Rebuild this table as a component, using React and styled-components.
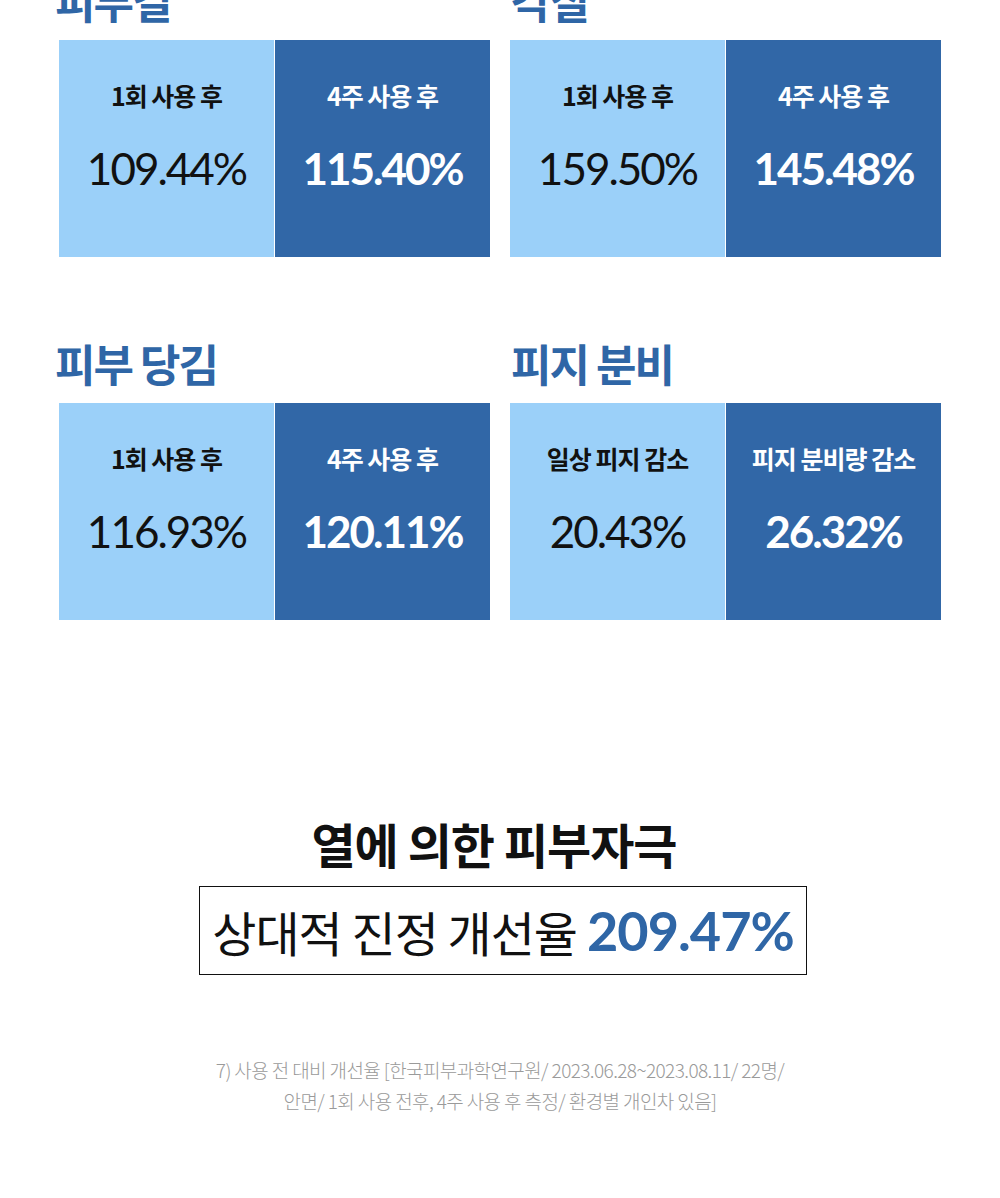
import styled, { createGlobalStyle } from 'styled-components';

const GlobalStyle = createGlobalStyle`
  html, body {
    margin: 0;
    padding: 0;
    background: #ffffff;
  }
  body {
    font-family: "Noto Sans CJK KR", "Noto Sans", sans-serif;
    color: #111111;
  }
`;

const LIGHT = '#9bd0f9';
const DARK = '#3167a7';
const HEAD_BLUE = '#2f66a6';

const Page = styled.div`
  width: 1000px;
  margin-top: -26px;
  padding-bottom: 80px;
`;

const Grid = styled.div`
  display: grid;
  grid-template-columns: 431px 431px;
  column-gap: 20px;
  row-gap: 80px;
  padding: 0 59px;
`;

const Section = styled.section`
  display: flex;
  flex-direction: column;
`;

const Heading = styled.h2`
  margin: 0 0 14px;
  font-size: 44px;
  line-height: 52px;
  font-weight: 700;
  color: ${HEAD_BLUE};
  letter-spacing: -2px;
  margin-left: ${(p) => (p.$right ? '1px' : '-4px')};
`;

const Card = styled.div`
  display: grid;
  grid-template-columns: 215px 215px;
  column-gap: 1px;
  height: 217px;
  background: #ffffff;
`;

const Cell = styled.div`
  display: flex;
  flex-direction: column;
  align-items: center;
  padding-top: 38px;
  background: ${(p) => (p.$dark ? DARK : LIGHT)};
  color: ${(p) => (p.$dark ? '#ffffff' : '#111111')};
`;

const Label = styled.div`
  font-size: 25px;
  line-height: 34px;
  font-weight: 600;
  letter-spacing: -1px;
  white-space: nowrap;
`;

const Value = styled.div`
  margin-top: 31px;
  font-family: "Lato", "Noto Sans", sans-serif;
  font-size: 44px;
  line-height: 50px;
  font-weight: ${(p) => (p.$dark ? 700 : 400)};
  letter-spacing: -2px;
`;

const Summary = styled.div`
  margin-top: 195px;
  display: flex;
  flex-direction: column;
  align-items: center;
`;

const Headline = styled.h3`
  margin: 0;
  font-size: 48px;
  line-height: 56px;
  font-weight: 700;
  letter-spacing: -1px;
  color: #111111;
  margin-left: -12px;
`;

const ResultBox = styled.div`
  margin-top: 15px;
  box-sizing: border-box;
  width: 608px;
  height: 89px;
  border: 1px solid #111111;
  display: flex;
  align-items: center;
  justify-content: center;
  gap: 10px;
  margin-left: 6px;
`;

const ResultText = styled.span`
  font-size: 48px;
  font-weight: 400;
  letter-spacing: -1px;
  color: #111111;
`;

const ResultValue = styled.span`
  font-family: "Lato", "Noto Sans", sans-serif;
  font-size: 54px;
  font-weight: 700;
  letter-spacing: -1px;
  color: ${HEAD_BLUE};
`;

const Footnote = styled.p`
  margin: 79px 0 0;
  text-align: center;
  font-size: 19px;
  line-height: 31px;
  font-weight: 300;
  letter-spacing: -0.6px;
  color: #9a9a9a;
`;

const sections = [
  {
    title: '피부결',
    cells: [
      { label: '1회 사용 후', value: '109.44%' },
      { label: '4주 사용 후', value: '115.40%' },
    ],
  },
  {
    title: '각질',
    cells: [
      { label: '1회 사용 후', value: '159.50%' },
      { label: '4주 사용 후', value: '145.48%' },
    ],
  },
  {
    title: '피부 당김',
    cells: [
      { label: '1회 사용 후', value: '116.93%' },
      { label: '4주 사용 후', value: '120.11%' },
    ],
  },
  {
    title: '피지 분비',
    cells: [
      { label: '일상 피지 감소', value: '20.43%' },
      { label: '피지 분비량 감소', value: '26.32%' },
    ],
  },
];

const App = () => {
  return (
    <Page>
      <GlobalStyle />
      <Grid>
        {sections.map((s, i) => (
          <Section key={s.title}>
            <Heading $right={i % 2 === 1}>{s.title}</Heading>
            <Card>
              {s.cells.map((c, j) => (
                <Cell key={c.label} $dark={j === 1}>
                  <Label>{c.label}</Label>
                  <Value $dark={j === 1}>{c.value}</Value>
                </Cell>
              ))}
            </Card>
          </Section>
        ))}
      </Grid>

      <Summary>
        <Headline>열에 의한 피부자극</Headline>
        <ResultBox>
          <ResultText>상대적 진정 개선율</ResultText>
          <ResultValue>209.47%</ResultValue>
        </ResultBox>
        <Footnote>
          7) 사용 전 대비 개선율 [한국피부과학연구원/ 2023.06.28~2023.08.11/ 22명/
          <br />
          안면/ 1회 사용 전후, 4주 사용 후 측정/ 환경별 개인차 있음]
        </Footnote>
      </Summary>
    </Page>
  );
};

export default App;
